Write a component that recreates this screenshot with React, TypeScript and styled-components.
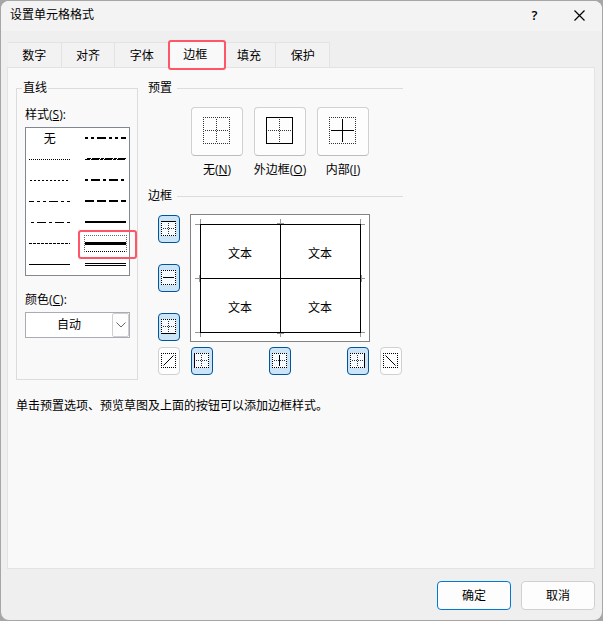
import React, { useState } from "react";
import styled, { createGlobalStyle, css } from "styled-components";

const Global = createGlobalStyle`
  * { box-sizing: border-box; }
  body {
    margin: 0;
    background: #a6a6a6;
    color: #000;
    font: 12px/16px "Open Sans", "Noto Sans CJK SC", sans-serif;
  }
  button, select { font: inherit; color: inherit; margin: 0; padding: 0; }
`;

const Page = styled.div`
  display: flex;
  min-height: 100vh;
  padding: 1px;
`;

const Dialog = styled.main`
  flex: 1;
  display: flex;
  flex-direction: column;
  border-radius: 8px;
  background: #efefef;
  overflow: hidden;
`;

const TitleBar = styled.header`
  display: flex;
  align-items: center;
  height: 30px;
  padding: 0 0 2px 9px;
  background: #f3f3f3;
`;

const Title = styled.h1`
  flex: 1;
  margin: 0;
  font-size: 12px;
  font-weight: 400;
`;

const CaptionButton = styled.button`
  display: flex;
  align-items: center;
  justify-content: center;
  width: 45px;
  height: 28px;
  border: 0;
  background: none;
  font-size: 13px;
  font-weight: 600;
`;

const TabList = styled.div`
  display: grid;
  grid-template-columns: repeat(6, 1fr);
  width: 322px;
  height: 25px;
  margin: 11px 0 0 7px;
`;

const Tab = styled.button<{ $active: boolean }>`
  position: relative;
  border: 1px solid #e3e3e3;
  border-width: 1px 1px 0 0;
  background: #f2f2f2;
  padding-top: 2px;
  ${(p) =>
    p.$active &&
    css`
      z-index: 1;
      background: #f9f9f9;
      padding: 0;
      border-color: transparent;
      &::before {
        content: "";
        position: absolute;
        inset: -3px -4px -3px -1px;
        border: 2px solid #ff5566;
        border-radius: 3px;
        background: #f9f9f9;
      }
    `}
`;

const TabText = styled.span`
  position: relative;
`;

const Panel = styled.section`
  flex: 1;
  margin: 0 7px 0 6px;
  padding: 12px 8px;
  border: 1px solid #e3e3e3;
  background: #f9f9f9;
`;

const Columns = styled.div`
  display: flex;
  align-items: flex-start;
  gap: 10px;
`;

const LineGroup = styled.fieldset`
  flex: none;
  width: 122px;
  margin: 0;
  padding: 11px 7px 41px 8px;
  border: 1px solid #dcdcdc;
`;

const Legend = styled.legend`
  margin: 0 0 0 -3px;
  padding: 0 1px;
`;

const FieldLabel = styled.label`
  display: block;
  margin-bottom: 4px;
`;

const StyleList = styled.div`
  display: grid;
  grid-template-columns: 1fr 1fr;
  grid-auto-rows: 21px;
  margin-bottom: 16px;
  border: 1px solid #828790;
  background: #fff;
`;

const StyleOption = styled.button<{ $selected: boolean }>`
  position: relative;
  display: flex;
  align-items: center;
  justify-content: center;
  border: 0;
  background: none;
  &:nth-child(odd) { padding-right: 4px; }
  &:nth-child(even) { padding-left: 4px; }
  svg { display: block; }
  ${(p) =>
    p.$selected &&
    css`
      &::before {
        content: "";
        position: absolute;
        inset: 2px 2px 2px 6px;
        border: 1px dotted #666;
        border-bottom-color: #000;
      }
      &::after {
        content: "";
        position: absolute;
        inset: -3px -8px -5px 0;
        border: 2px solid #ff5566;
        border-radius: 3px;
        z-index: 1;
      }
    `}
`;

const SelectWrap = styled.div`
  position: relative;
`;

const ColorSelect = styled.select`
  display: block;
  appearance: none;
  width: 100%;
  height: 26px;
  padding: 0 17px 0 0;
  border: 1px solid #ababb3;
  border-radius: 0;
  background: #fff;
  text-align: center;
  text-align-last: center;
`;

const Arrow = styled.span`
  position: absolute;
  top: 1px;
  right: 1px;
  bottom: 1px;
  width: 17px;
  display: flex;
  align-items: center;
  justify-content: center;
  border: 1px solid #cfcfcf;
  border-radius: 2px;
  background: #fdfdfd;
  pointer-events: none;
`;

const BorderColumn = styled.div`
  flex: 1;
  max-width: 255px;
`;

const SectionTitle = styled.h2`
  display: flex;
  align-items: center;
  gap: 5px;
  margin: 0;
  font-size: 12px;
  font-weight: 400;
  &::after {
    content: "";
    flex: 1;
    height: 1px;
    background: #dcdcdc;
  }
`;

const Presets = styled.div`
  display: flex;
  gap: 11px;
  margin: 11px 0 10px;
  padding-left: 43px;
`;

const Preset = styled.div`
  display: flex;
  flex-direction: column;
  align-items: center;
  gap: 6px;
  width: 52px;
  white-space: nowrap;
`;

const PresetButton = styled.button`
  display: flex;
  justify-content: center;
  align-items: flex-start;
  width: 52px;
  height: 49px;
  padding: 9px 1px 0 0;
  border: 1px solid #d0d0d0;
  border-bottom-color: #bcbcbc;
  border-radius: 4px;
  background: #fdfdfd;
`;

const Editor = styled.div`
  display: grid;
  grid-template-columns: 22px 180px 22px;
  grid-template-areas:
    "side preview ."
    "up bottom down";
  gap: 5px 10px;
  margin-top: 10px;
  padding-left: 10px;
`;

const SideButtons = styled.div`
  grid-area: side;
  display: flex;
  flex-direction: column;
  justify-content: space-between;
  padding: 1px 0;
`;

const BottomButtons = styled.div`
  grid-area: bottom;
  display: flex;
  justify-content: space-between;
  padding: 0 1px;
`;

const DiagonalSlot = styled.div<{ $area: string }>`
  grid-area: ${(p) => p.$area};
`;

const EdgeButton = styled.button<{ $on: boolean }>`
  display: block;
  width: 22px;
  height: 28px;
  padding: 5px 3px 6px 2px;
  border: 1px solid ${(p) => (p.$on ? "#005499" : "#d0d0d0")};
  border-radius: 4px;
  background: ${(p) => (p.$on ? "#cce4f7" : "#fdfdfd")};
  svg { display: block; }
`;

const Preview = styled.div`
  position: relative;
  grid-area: preview;
  display: grid;
  grid-template-columns: 1fr 1fr;
  grid-auto-rows: 54px;
  align-items: center;
  justify-items: center;
  height: 128px;
  padding: 9px 9px 0;
  border: 1px solid #828287;
  background: #fff;
`;

const PreviewLines = styled.svg`
  position: absolute;
  top: -1px;
  left: -1px;
`;

const CellText = styled.span`
  padding-top: 5px;
`;

const Hint = styled.p`
  margin: 18px 0 0;
`;

const Footer = styled.footer`
  display: flex;
  justify-content: flex-end;
  gap: 10px;
  padding: 12px 7px 10px;
`;

const ActionButton = styled.button<{ $primary?: boolean }>`
  width: 74px;
  height: 29px;
  border: 1px solid ${(p) => (p.$primary ? "#0078d4" : "#d0d0d0")};
  border-radius: 4px;
  background: #fdfdfd;
`;

type LineSpec = { name: string; width?: number; dash?: string; offset?: number; kind?: "none" | "slant" | "double" };

const lineStyles: LineSpec[] = [
  { name: "无", kind: "none" },
  { name: "中等双点划线", width: 2, dash: "3 3 3 3 9 3" },
  { name: "细点线", width: 1, dash: "1 1" },
  { name: "斜点划线", kind: "slant" },
  { name: "点线", width: 1, dash: "2 2", offset: 3 },
  { name: "中等点划线", width: 2, dash: "3 3 9 3" },
  { name: "双点划线", width: 1, dash: "9 3 3 3 3 3", offset: 4 },
  { name: "中等虚线", width: 2, dash: "9 3" },
  { name: "点划线", width: 1, dash: "3 3 9 3", offset: 16 },
  { name: "中等实线", width: 2 },
  { name: "虚线", width: 1, dash: "3 1" },
  { name: "粗实线", width: 3 },
  { name: "细实线", width: 1 },
  { name: "双线", kind: "double" },
];

function LineSample({ spec }: { spec: LineSpec }) {
  const w = spec.width ?? 1;
  const y = w === 2 ? 4 : 4.5;
  return (
    <svg width="41" height="9" viewBox="0 0 41 9" stroke="#000" shapeRendering="crispEdges" aria-hidden="true">
      {spec.kind === "double" && <path d="M0 3.5h41M0 5.5h41" />}
      {spec.kind === "slant" && (
        <>
          <path d="M2 3.5h4M7 3.5h8M16 3.5h3M20 3.5h8M29 3.5h3M33 3.5h8" />
          <path d="M0 4.5h5M6 4.5h8M15 4.5h3M19 4.5h8M28 4.5h3M32 4.5h8" />
        </>
      )}
      {!spec.kind && <path d={`M0 ${y}h41`} strokeWidth={w} strokeDasharray={spec.dash} strokeDashoffset={spec.offset} />}
    </svg>
  );
}

function PresetIcon({ kind }: { kind: string }) {
  const frame = "M0 .5h27M0 26.5h27M.5 0v27M26.5 0v27";
  return (
    <svg width="27" height="27" viewBox="0 0 27 27" fill="none" stroke="#000" shapeRendering="crispEdges" aria-hidden="true">
      {kind === "outline" ? (
        <rect x=".5" y=".5" width="26" height="26" />
      ) : (
        <path d={frame} stroke="#333" strokeDasharray="1 1" />
      )}
      {kind === "inside" ? (
        <path d="M2 13.5h23M13.5 2v23" />
      ) : (
        <path d="M2 13.5h23M13.5 2v23" stroke="#333" strokeDasharray="1 1" />
      )}
    </svg>
  );
}

const outerEdges: Record<string, string> = {
  top: "M0 .5h15",
  bottom: "M0 14.5h15",
  left: "M.5 0v15",
  right: "M14.5 0v15",
};

const solidLines: Record<string, string> = {
  ...outerEdges,
  horizontal: "M2 7.5h11",
  vertical: "M7.5 2v11",
};

function EdgeIcon({ kind }: { kind: string }) {
  const diagonal = kind === "up" || kind === "down";
  const edges = Object.keys(outerEdges).filter((k) => k !== kind).map((k) => outerEdges[k]).join("");
  return (
    <svg width="15" height="15" viewBox="0 0 15 15" stroke="#000" fill="none" aria-hidden="true">
      <rect width="15" height="15" fill="#fff" fillOpacity=".8" stroke="none" />
      <g shapeRendering="crispEdges">
        <path d={edges} strokeDasharray="1 1" />
        {!diagonal && kind !== "horizontal" && <path d="M2 7.5h11" stroke="#333" strokeDasharray="1 1" />}
        {!diagonal && kind !== "vertical" && kind !== "horizontal" && (
          <path d="M7.5 2v11" stroke="#333" strokeDasharray="1 1" />
        )}
        {!diagonal && <path d={solidLines[kind]} />}
      </g>
      {kind === "up" && <path d="M2.5 12.5l10-10" />}
      {kind === "down" && <path d="M2.5 2.5l10 10" />}
    </svg>
  );
}

const edgeNames: Record<string, string> = {
  top: "上边框",
  horizontal: "内部横线",
  bottom: "下边框",
  up: "斜线向上",
  left: "左边框",
  vertical: "内部竖线",
  right: "右边框",
  down: "斜线向下",
};

const tabs = ["数字", "对齐", "字体", "边框", "填充", "保护"];
const presets = [
  { id: "none", text: "无", hotkey: "N" },
  { id: "outline", text: "外边框", hotkey: "O" },
  { id: "inside", text: "内部", hotkey: "I" },
];

export default function App() {
  const [tab, setTab] = useState("边框");
  const [line, setLine] = useState("粗实线");
  const [off, setOff] = useState<string[]>(["up", "down"]);

  const edge = (kind: string) => (
    <EdgeButton
      key={kind}
      type="button"
      aria-label={edgeNames[kind]}
      aria-pressed={!off.includes(kind)}
      $on={!off.includes(kind)}
      onClick={() => setOff((o) => (o.includes(kind) ? o.filter((k) => k !== kind) : [...o, kind]))}
    >
      <EdgeIcon kind={kind} />
    </EdgeButton>
  );

  return (
    <Page>
      <Global />
      <Dialog>
        <TitleBar>
          <Title>设置单元格格式</Title>
          <CaptionButton type="button" aria-label="帮助">?</CaptionButton>
          <CaptionButton type="button" aria-label="关闭">
            <svg width="11" height="11" viewBox="0 0 11 11" stroke="#000" strokeWidth="1.2" aria-hidden="true">
              <path d="M.5 .5l10 10M10.5 .5l-10 10" />
            </svg>
          </CaptionButton>
        </TitleBar>

        <TabList role="tablist">
          {tabs.map((t) => (
            <Tab key={t} type="button" role="tab" aria-selected={t === tab} $active={t === tab} onClick={() => setTab(t)}>
              <TabText>{t}</TabText>
            </Tab>
          ))}
        </TabList>

        <Panel role="tabpanel">
          <Columns>
            <LineGroup>
              <Legend>直线</Legend>
              <FieldLabel as="div" id="style-label">样式(<u>S</u>):</FieldLabel>
              <StyleList role="listbox" aria-labelledby="style-label">
                {lineStyles.map((s) => (
                  <StyleOption
                    key={s.name}
                    type="button"
                    role="option"
                    aria-label={s.name}
                    aria-selected={s.name === line}
                    $selected={s.name === line}
                    onClick={() => setLine(s.name)}
                  >
                    {s.kind === "none" ? "无" : <LineSample spec={s} />}
                  </StyleOption>
                ))}
              </StyleList>
              <FieldLabel htmlFor="color">颜色(<u>C</u>):</FieldLabel>
              <SelectWrap>
                <ColorSelect id="color">
                  <option>自动</option>
                </ColorSelect>
                <Arrow>
                  <svg width="10" height="6" viewBox="0 0 10 6" fill="none" stroke="#666" aria-hidden="true">
                    <path d="M.5 .5L5 5L9.5 .5" />
                  </svg>
                </Arrow>
              </SelectWrap>
            </LineGroup>

            <BorderColumn>
              <SectionTitle>预置</SectionTitle>
              <Presets>
                {presets.map((p) => (
                  <Preset key={p.id}>
                    <PresetButton type="button" id={`preset-${p.id}`}>
                      <PresetIcon kind={p.id} />
                    </PresetButton>
                    <label htmlFor={`preset-${p.id}`}>{p.text}(<u>{p.hotkey}</u>)</label>
                  </Preset>
                ))}
              </Presets>

              <SectionTitle>边框</SectionTitle>
              <Editor>
                <SideButtons>{["top", "horizontal", "bottom"].map(edge)}</SideButtons>
                <Preview>
                  <PreviewLines width="180" height="128" viewBox="0 0 180 128" fill="none" shapeRendering="crispEdges" aria-hidden="true">
                    <path
                      stroke="#969696"
                      d="M5 10.5h5M10.5 5v5M90.5 5v5M170.5 5v5M171 10.5h4M5 64.5h5M9.5 61v7M171 64.5h4M171.5 61v7M5 118.5h5M10.5 119v4M90.5 119v4M170.5 119v4M171 118.5h4M87 9.5h7M87 119.5h7"
                    />
                    <path
                      stroke="#000"
                      d={[
                        !off.includes("top") && "M10 10.5h161",
                        !off.includes("horizontal") && "M10 64.5h161",
                        !off.includes("bottom") && "M10 118.5h161",
                        !off.includes("left") && "M10.5 10v109",
                        !off.includes("vertical") && "M90.5 10v109",
                        !off.includes("right") && "M170.5 10v109",
                        !off.includes("up") && "M10 118L90 64M90 118L170 64M10 64L90 10M90 64L170 10",
                        !off.includes("down") && "M10 10L90 64M90 10L170 64M10 64L90 118M90 64L170 118",
                      ].filter(Boolean).join("")}
                    />
                  </PreviewLines>
                  {[0, 1, 2, 3].map((i) => <CellText key={i}>文本</CellText>)}
                </Preview>
                <DiagonalSlot $area="up">{edge("up")}</DiagonalSlot>
                <BottomButtons>{["left", "vertical", "right"].map(edge)}</BottomButtons>
                <DiagonalSlot $area="down">{edge("down")}</DiagonalSlot>
              </Editor>
            </BorderColumn>
          </Columns>
          <Hint>单击预置选项、预览草图及上面的按钮可以添加边框样式。</Hint>
        </Panel>

        <Footer>
          <ActionButton type="button" $primary>确定</ActionButton>
          <ActionButton type="button">取消</ActionButton>
        </Footer>
      </Dialog>
    </Page>
  );
}
